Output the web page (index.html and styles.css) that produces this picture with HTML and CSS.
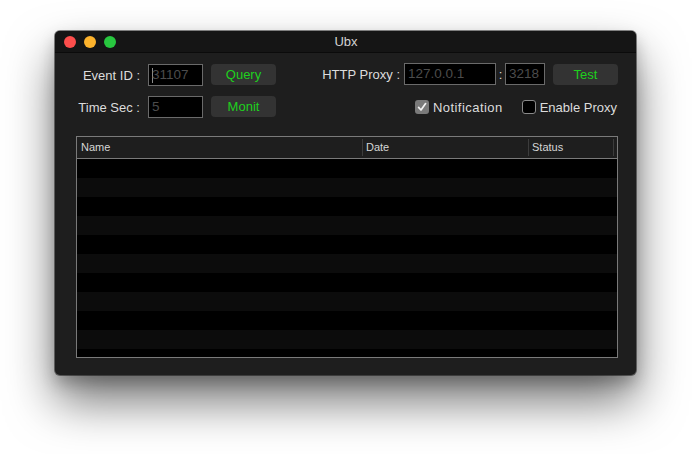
FILE: index.html
```html
<!DOCTYPE html>
<html>
<head>
<meta charset="utf-8">
<link rel="stylesheet" href="styles.css">
</head>
<body>
<div class="window">
  <div class="titlebar">
    <div class="lights">
      <span class="light red"></span>
      <span class="light yellow"></span>
      <span class="light green"></span>
    </div>
    <div class="title">Ubx</div>
  </div>
  <div class="content">
    <div class="controls">
      <div class="left">
        <label class="lbl">Event ID :</label>
        <div class="field w55"><span class="caret"></span>31107</div>
        <button class="btn">Query</button>
        <label class="lbl">Time Sec :</label>
        <div class="field w55">5</div>
        <button class="btn">Monit</button>
      </div>
      <div class="right">
        <div class="row">
          <label class="lbl">HTTP Proxy :</label>
          <div class="field w92">127.0.0.1</div>
          <span class="colon">:</span>
          <div class="field w40">3218</div>
          <button class="btn test">Test</button>
        </div>
        <div class="row checks">
          <span class="check on">
            <svg viewBox="0 0 14 14" width="14" height="14"><path d="M3.6 7.4 L6 10 L10.6 3.6" fill="none" stroke="#f2f2f2" stroke-width="1.7" stroke-linecap="round" stroke-linejoin="round"/></svg>
          </span>
          <span class="ctext wide">Notification</span>
          <span class="check off"></span>
          <span class="ctext">Enable Proxy</span>
        </div>
      </div>
    </div>
    <div class="table">
      <div class="thead">
        <div class="th c1">Name</div>
        <div class="th c2">Date</div>
        <div class="th c3">Status</div>
        <div class="th c4"></div>
      </div>
      <div class="tbody">
        <div class="tr"></div><div class="tr"></div><div class="tr"></div>
        <div class="tr"></div><div class="tr"></div><div class="tr"></div>
        <div class="tr"></div><div class="tr"></div><div class="tr"></div>
        <div class="tr"></div><div class="tr"></div>
      </div>
    </div>
  </div>
</div>
</body>
</html>
```

FILE: styles.css
```css
html, body {
  margin: 0;
  padding: 0;
  background: #ffffff;
}
body {
  box-sizing: border-box;
  min-height: 454px;
  padding: 31px 0 0 55px;
  font-family: "Liberation Sans", Arial, sans-serif;
}
.window {
  width: 581px;
  height: 344px;
  border-radius: 5px;
  background: #1e1e1e;
  box-shadow: 0 0 0 1px rgba(0,0,0,0.45), 0 26px 48px rgba(0,0,0,0.55), 0 8px 16px rgba(0,0,0,0.22);
  overflow: hidden;
  display: flex;
  flex-direction: column;
}
.titlebar {
  height: 21px;
  border-bottom: 1px solid #0b0b0b;
  background: #151515;
  position: relative;
  display: flex;
  align-items: center;
  justify-content: center;
}
.lights {
  position: absolute;
  left: 9px;
  top: 5px;
  display: flex;
  gap: 8px;
}
.light {
  width: 12px;
  height: 12px;
  border-radius: 50%;
}
.red { background: #fd4e4c; }
.yellow { background: #fdb32c; }
.green { background: #28c73f; }
.title {
  color: #d2d2d2;
  font-size: 13px;
  margin-left: 1px;
}
.content {
  flex: 1;
  padding: 11px 18px 0 21px;
  display: flex;
  flex-direction: column;
}
.controls {
  display: flex;
  justify-content: space-between;
  height: 54px;
}
.left {
  display: grid;
  grid-template-columns: 64px 55px 65px;
  grid-template-rows: 22px 22px;
  column-gap: 8px;
  row-gap: 10px;
  align-items: center;
}
.lbl {
  color: #dcdcdc;
  font-size: 13px;
  text-align: right;
  white-space: nowrap;
}
.field {
  box-sizing: border-box;
  height: 22px;
  background: #000;
  border: 1px solid #6a6a6a;
  color: #4c4c4c;
  font-size: 13.5px;
  line-height: 20px;
  padding-left: 3px;
  display: flex;
  align-items: center;
}
.w55 { width: 55px; }
.w92 { width: 92px; }
.w40 { width: 40px; }
.caret {
  width: 1px;
  height: 15px;
  background: #8a8a8a;
  margin-right: -1px;
}
.btn {
  height: 21px;
  align-self: start;
  width: 65px;
  border: none;
  border-radius: 4px;
  background: #333333;
  color: #1ed01e;
  font-family: "Liberation Sans", Arial, sans-serif;
  font-size: 13px;
  padding: 0;
}
.right {
  display: flex;
  flex-direction: column;
  align-items: flex-end;
  gap: 10px;
  margin-top: -1px;
}
.row {
  display: flex;
  align-items: center;
  height: 22px;
}
.row .lbl { margin-right: 4px; }
.colon {
  color: #dcdcdc;
  font-size: 13px;
  width: 9px;
  text-align: center;
}
.test {
  margin-left: 8px;
  align-self: center;
}
.checks {
  margin-top: 1px;
  margin-right: 1px;
}
.check {
  box-sizing: border-box;
  width: 14px;
  height: 14px;
  border-radius: 3px;
  display: flex;
}
.check.on { background: #7a7a7a; }
.check.off { background: #000; border: 1px solid #8a8a8a; }
.ctext {
  color: #dcdcdc;
  font-size: 13px;
  margin-left: 4px;
}
.ctext.wide {
  letter-spacing: 0.45px;
  margin-right: 19px;
}
.table {
  margin-top: 18px;
  width: 542px;
  height: 222px;
  box-sizing: border-box;
  border: 1px solid #7a7a7a;
  display: flex;
  flex-direction: column;
  overflow: hidden;
}
.thead {
  height: 21px;
  border-bottom: 1px solid #7a7a7a;
  background: #1e1e1e;
  display: flex;
  flex-shrink: 0;
}
.th {
  box-sizing: border-box;
  color: #d6d6d6;
  font-size: 11px;
  line-height: 21px;
  padding-left: 4px;
  position: relative;
}
.th + .th::before {
  content: "";
  position: absolute;
  left: 0;
  top: 2px;
  bottom: 2px;
  width: 1px;
  background: #3c3c3c;
}
.c1 { width: 285px; }
.c2 { width: 166px; }
.c3 { width: 85px; }
.c4 { flex: 1; }
.tbody {
  flex: 1;
  overflow: hidden;
}
.tr {
  height: 19px;
  background: #000;
}
.tr:nth-child(even) { background: #0c0c0c; }
```
